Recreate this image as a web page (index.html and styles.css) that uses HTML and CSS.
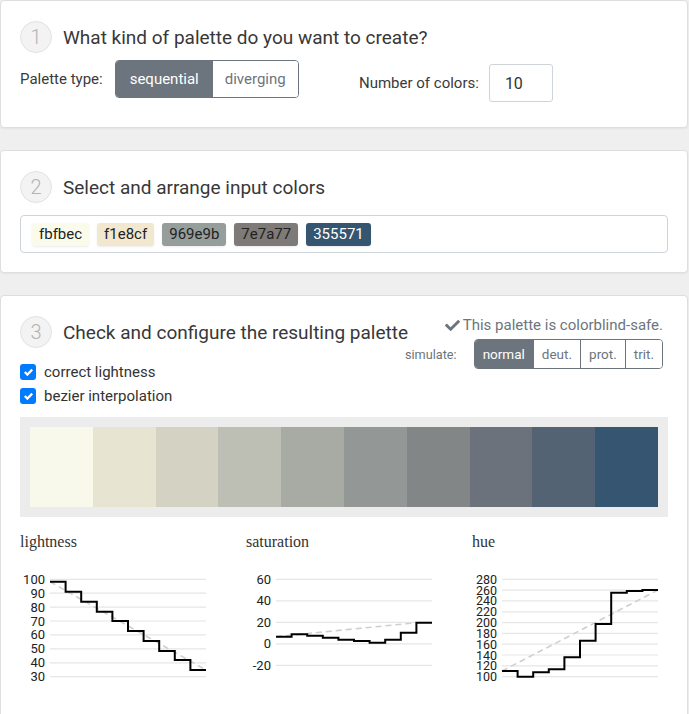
FILE: index.html
```html
<!DOCTYPE html>
<html>
<head>
<meta charset="utf-8">
<link rel="stylesheet" href="styles.css">
</head>
<body>
<div class="card card-one">
  <div class="step-head">
    <span class="step-num">1</span>
    <h2 class="step-title">What kind of palette do you want to create?</h2>
  </div>
  <div class="type-row">
    <div class="field field-type">
      <span class="field-label">Palette type:</span>
      <div class="btn-group">
        <span class="btn active">sequential</span><span class="btn">diverging</span>
      </div>
    </div>
    <div class="field field-count">
      <span class="field-label">Number of colors:</span>
      <span class="num-input">10</span>
    </div>
  </div>
</div>

<div class="card card-two">
  <div class="step-head">
    <span class="step-num">2</span>
    <h2 class="step-title">Select and arrange input colors</h2>
  </div>
  <div class="color-input">
    <span class="chip chip-1">fbfbec</span>
    <span class="chip chip-2">f1e8cf</span>
    <span class="chip chip-3">969e9b</span>
    <span class="chip chip-4">7e7a77</span>
    <span class="chip chip-5">355571</span>
  </div>
</div>

<div class="card card-three">
  <div class="step-head step-head-split">
    <div class="step-left">
      <span class="step-num">3</span>
      <h2 class="step-title">Check and configure the resulting palette</h2>
    </div>
    <div class="cb-block">
      <div class="cb-safe">
        <svg class="cb-check" viewBox="0 0 512 512" width="17" height="15"><path fill="#6c757d" d="M173.898 439.404l-166.4-166.4c-9.997-9.997-9.997-26.206 0-36.204l36.203-36.204c9.997-9.998 26.207-9.998 36.204 0L192 312.69 432.095 72.596c9.997-9.997 26.207-9.997 36.204 0l36.203 36.204c9.997 9.997 9.997 26.206 0 36.204l-294.4 294.401c-9.998 9.997-26.207 9.997-36.204-.001z"/></svg>
        <span>This palette is colorblind-safe.</span>
      </div>
      <div class="sim-row">
        <span class="sim-label">simulate:</span>
        <div class="btn-group btn-group-sm">
          <span class="btn active">normal</span><span class="btn">deut.</span><span class="btn">prot.</span><span class="btn">trit.</span>
        </div>
      </div>
    </div>
  </div>

  <div class="checks">
    <label class="check-line"><span class="check-box"><svg viewBox="0 0 8 8" width="9" height="9"><path fill="#fff" d="M6.564.75l-3.59 3.612-1.538-1.55L0 4.26l2.974 2.99L8 2.193z"/></svg></span>correct lightness</label>
    <label class="check-line"><span class="check-box"><svg viewBox="0 0 8 8" width="9" height="9"><path fill="#fff" d="M6.564.75l-3.59 3.612-1.538-1.55L0 4.26l2.974 2.99L8 2.193z"/></svg></span>bezier interpolation</label>
  </div>

  <div class="palette">
    <div class="swatches">
      <span class="sw" style="background:#f8f9ea"></span>
      <span class="sw" style="background:#e7e4d2"></span>
      <span class="sw" style="background:#d4d2c2"></span>
      <span class="sw" style="background:#bdbeb4"></span>
      <span class="sw" style="background:#a7aba4"></span>
      <span class="sw" style="background:#939795"></span>
      <span class="sw" style="background:#838687"></span>
      <span class="sw" style="background:#6c727b"></span>
      <span class="sw" style="background:#536373"></span>
      <span class="sw" style="background:#355571"></span>
    </div>
  </div>

  <div class="charts">
    <div class="chart">
      <div class="chart-title">lightness</div>
      <svg class="chart-svg" width="200" height="130" viewBox="0 0 200 130">
        <g class="grid">
          <line x1="30" x2="186" y1="9.3" y2="9.3"/><line x1="30" x2="186" y1="23.2" y2="23.2"/><line x1="30" x2="186" y1="37.1" y2="37.1"/><line x1="30" x2="186" y1="51" y2="51"/><line x1="30" x2="186" y1="64.9" y2="64.9"/><line x1="30" x2="186" y1="78.9" y2="78.9"/><line x1="30" x2="186" y1="92.8" y2="92.8"/><line x1="30" x2="186" y1="106.7" y2="106.7"/>
        </g>
        <g class="ticks">
          <text x="25" y="9.3">100</text><text x="25" y="23.2">90</text><text x="25" y="37.1">80</text><text x="25" y="51">70</text><text x="25" y="64.9">60</text><text x="25" y="78.9">50</text><text x="25" y="92.8">40</text><text x="25" y="106.7">30</text>
        </g>
        <path class="dash" d="M30 11.7 L186 100"/>
        <path class="step" d="M30 11.7 H45.6 V21.7 H61.2 V31.7 H76.8 V41.7 H92.4 V51 H108 V61 H123.6 V71 H139.2 V81 H154.8 V90 H170.4 V100 H186"/>
      </svg>
    </div>
    <div class="chart">
      <div class="chart-title">saturation</div>
      <svg class="chart-svg" width="200" height="130" viewBox="0 0 200 130">
        <g class="grid">
          <line x1="30" x2="186" y1="9.3" y2="9.3"/><line x1="30" x2="186" y1="30.8" y2="30.8"/><line x1="30" x2="186" y1="52.3" y2="52.3"/><line x1="30" x2="186" y1="73.8" y2="73.8"/><line x1="30" x2="186" y1="95.3" y2="95.3"/>
        </g>
        <g class="ticks">
          <text x="25" y="9.3">60</text><text x="25" y="30.8">40</text><text x="25" y="52.3">20</text><text x="25" y="73.8">0</text><text x="25" y="95.3">-20</text>
        </g>
        <path class="dash" d="M30 66.7 L170.4 52.7"/>
        <path class="step" d="M30 66.7 H45.6 V64.3 H61.2 V65.7 H76.8 V67.7 H92.4 V69.7 H108 V71 H123.6 V72.7 H139.2 V69.7 H154.8 V62.7 H170.4 V52.7 H186"/>
      </svg>
    </div>
    <div class="chart">
      <div class="chart-title">hue</div>
      <svg class="chart-svg" width="200" height="130" viewBox="0 0 200 130">
        <g class="grid">
          <line x1="30" x2="186" y1="9.3" y2="9.3"/><line x1="30" x2="186" y1="20.1" y2="20.1"/><line x1="30" x2="186" y1="30.9" y2="30.9"/><line x1="30" x2="186" y1="41.8" y2="41.8"/><line x1="30" x2="186" y1="52.6" y2="52.6"/><line x1="30" x2="186" y1="63.4" y2="63.4"/><line x1="30" x2="186" y1="74.2" y2="74.2"/><line x1="30" x2="186" y1="85" y2="85"/><line x1="30" x2="186" y1="95.9" y2="95.9"/><line x1="30" x2="186" y1="106.7" y2="106.7"/>
        </g>
        <g class="ticks ticks-dense">
          <text x="25" y="9.3">280</text><text x="25" y="20.1">260</text><text x="25" y="30.9">240</text><text x="25" y="41.8">220</text><text x="25" y="52.6">200</text><text x="25" y="63.4">180</text><text x="25" y="74.2">160</text><text x="25" y="85">140</text><text x="25" y="95.9">120</text><text x="25" y="106.7">100</text>
        </g>
        <path class="dash" d="M30 101 L186 20"/>
        <path class="step" d="M30 101 H45.6 V106.7 H61.2 V102.3 H76.8 V99.3 H92.4 V87.3 H108 V70.7 H123.6 V54 H139.2 V22.7 H154.8 V21 H170.4 V20 H186"/>
      </svg>
    </div>
  </div>
</div>
</body>
</html>
```
FILE: styles.css
```css
* { box-sizing: border-box; }

body {
  margin: 0;
  background: #efefef;
  font-family: Roboto, "Liberation Sans", sans-serif;
  color: #333;
}

.card {
  width: 688px;
  background: #fff;
  border: 1px solid #dedede;
  border-radius: 4px;
  padding: 20px 19px;
  box-shadow: 0 1px 2px rgba(0, 0, 0, 0.05);
}

.card + .card { margin-top: 22px; }

.card-one { padding-bottom: 25px; }
.card-two { padding-bottom: 19px; }

.step-head {
  display: flex;
  align-items: center;
  height: 32px;
}

.step-left {
  display: flex;
  align-items: center;
  height: 32px;
  flex: 1 1 auto;
  min-width: 0;
}

.step-num {
  width: 32px;
  height: 32px;
  border-radius: 50%;
  background: #f3f3f3;
  border: 1px solid #e2e2e2;
  color: #b4b4b4;
  font-size: 20px;
  font-weight: 300;
  display: flex;
  align-items: center;
  justify-content: center;
  flex: none;
}

.step-title {
  margin: 0 0 0 11px;
  font-size: 19px;
  font-weight: 400;
  color: #383838;
  white-space: nowrap;
}

/* step 1 */
.type-row {
  margin-top: 7px;
  display: grid;
  grid-template-columns: 309px 309px;
  column-gap: 30px;
  align-items: start;
}

.field {
  display: flex;
  align-items: center;
}

.field-label {
  font-size: 15px;
  color: #3a3a3a;
}

.field-type .field-label { margin-right: 12px; }

.field-count { margin-top: 4px; }
.field-count .field-label { margin-right: 10px; }

.btn-group {
  display: inline-flex;
  border: 1px solid #6c757d;
  border-radius: 4px;
  overflow: hidden;
}

.btn {
  height: 36px;
  padding: 0 12px;
  display: flex;
  align-items: center;
  font-size: 15px;
  color: #6c757d;
  background: #fff;
}

.btn + .btn { border-left: 1px solid #6c757d; }

.btn.active {
  background: #6c757d;
  color: #fff;
}

.field-type .btn:first-child { padding: 0 13px 0 14px; }

.num-input {
  width: 64px;
  height: 38px;
  border: 1px solid #ced4da;
  border-radius: 3px;
  padding: 0 15px;
  display: flex;
  align-items: center;
  font-size: 16px;
  color: #333;
}

/* step 2 */
.color-input {
  margin-top: 12px;
  height: 38px;
  border: 1px solid #ced4da;
  border-radius: 4px;
  padding: 0 11px;
  display: flex;
  align-items: center;
  gap: 8px;
}

.chip {
  height: 23px;
  padding: 0 7px;
  border-radius: 3px;
  display: flex;
  align-items: center;
  font-size: 15px;
  color: #222;
  box-shadow: 0 1px 2px rgba(0, 0, 0, 0.08);
}

.chip-1 { background: #fbfbec; }
.chip-2 { background: #f1e8cf; }
.chip-3 { background: #969e9b; }
.chip-4 { background: #7e7a77; }
.chip-5 { background: #355571; color: #fff; }

/* step 3 */
.step-head-split {
  justify-content: space-between;
  align-items: flex-start;
}

.cb-block {
  flex: none;
  display: flex;
  flex-direction: column;
  align-items: flex-end;
  margin-right: 5px;
  margin-left: -20px;
  position: relative;
  z-index: 1;
}

.cb-safe {
  display: flex;
  align-items: center;
  height: 18px;
  font-size: 15px;
  color: #6c757d;
  white-space: nowrap;
}

.cb-check { margin-right: 2px; }

.sim-row {
  margin-top: 5px;
  display: flex;
  align-items: center;
}

.sim-label {
  font-size: 12.7px;
  color: #6c757d;
  margin-right: 17px;
}

.btn-group-sm .btn {
  height: 28px;
  font-size: 13.5px;
  padding: 0 8px;
}

.checks {
  margin-top: 12px;
}

.check-line {
  display: flex;
  align-items: center;
  height: 24px;
  font-size: 15px;
  color: #333;
}

.check-box {
  width: 16px;
  height: 16px;
  border-radius: 3px;
  background: #007bff;
  display: flex;
  align-items: center;
  justify-content: center;
  margin-right: 8px;
}

.palette {
  margin-top: 9px;
  background: #ececec;
  padding: 10px;
}

.swatches {
  display: flex;
  height: 80px;
}

.sw { flex: 1; }

.charts {
  margin-top: 15px;
  display: grid;
  grid-template-columns: repeat(3, 226px);
}

.chart-title {
  font-family: "Liberation Serif", "Times New Roman", serif;
  font-size: 16px;
  line-height: 20px;
  color: #333;
}

.chart-svg {
  display: block;
  margin-top: 18px;
}

.grid line {
  stroke: #e6e6e6;
  stroke-width: 1.2;
}

.ticks text {
  font-family: Roboto, "Liberation Sans", sans-serif;
  font-size: 13px;
  fill: #222;
  text-anchor: end;
  dominant-baseline: central;
}

.ticks-dense text {
  font-size: 12.5px;
}

.dash {
  fill: none;
  stroke: #cfcfcf;
  stroke-width: 1.6;
  stroke-dasharray: 6 4;
}

.step {
  fill: none;
  stroke: #000;
  stroke-width: 2;
}
```
